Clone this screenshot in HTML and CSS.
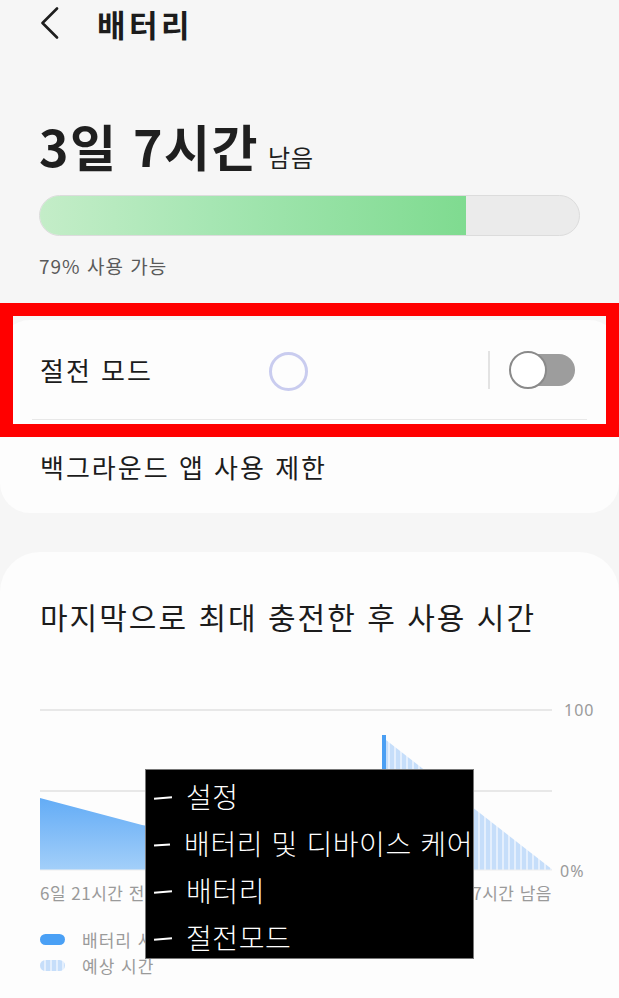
FILE: index.html
```html
<!DOCTYPE html>
<html lang="ko">
<head>
<meta charset="utf-8">
<title>배터리</title>
<link rel="stylesheet" href="styles.css">
</head>
<body>
<div class="screen">
  <header class="appbar">
    <svg class="back" width="20" height="32" viewBox="0 0 20 32"><polyline points="17,1.5 2.5,16 17,30.5" fill="none" stroke="#1e1e1e" stroke-width="2.6" stroke-linecap="round" stroke-linejoin="round"/></svg>
    <h1 class="title">배터리</h1>
  </header>

  <section class="summary">
    <div class="remain"><span class="big">3일 7시간</span><span class="small">남음</span></div>
    <div class="bar"><div class="fill" style="width:79%"></div></div>
    <div class="caption">79% 사용 가능</div>
  </section>

  <section class="card">
    <div class="row row-first">
      <span class="label">절전 모드</span>
      <span class="spinner"></span>
      <span class="vdiv"></span>
      <span class="toggle"><span class="knob"></span></span>
    </div>
    <div class="hdiv"></div>
    <div class="row row-second">
      <span class="label">백그라운드 앱 사용 제한</span>
    </div>
  </section>

  <section class="card2">
    <h2 class="ctitle">마지막으로 최대 충전한 후 사용 시간</h2>
    <div class="chartwrap">
      <svg class="chart" width="552" height="180" viewBox="0 0 552 180">
        <defs>
          <linearGradient id="blueGrad" x1="0" y1="0" x2="0" y2="1">
            <stop offset="0" stop-color="#63acf6"/>
            <stop offset="1" stop-color="#a3cff9"/>
          </linearGradient>
          <pattern id="stripes" width="6" height="10" patternUnits="userSpaceOnUse">
            <rect width="6" height="10" fill="#e4effd"/>
            <rect width="4" height="10" fill="#c6defa"/>
          </pattern>
        </defs>
        <line x1="40" y1="12" x2="552" y2="12" stroke="#e8e8e8" stroke-width="2"/>
        <line x1="40" y1="93" x2="552" y2="93" stroke="#e8e8e8" stroke-width="2"/>
        <polygon points="40,100 142,127 382,168 382,172 40,172" fill="url(#blueGrad)"/>
        <polygon points="386,42 553,172 386,172" fill="url(#stripes)"/>
        <rect x="382" y="37" width="4" height="135" fill="#4b9ff3"/>
        <line x1="40" y1="172" x2="552" y2="172" stroke="#eeeeee" stroke-width="1"/>
      </svg>
      <div class="axis">
        <span>100</span>
        <span>0%</span>
      </div>
    </div>
    <div class="xlabels"><span>6일 21시간 전</span><span>3일 7시간 남음</span></div>
    <ul class="legend">
      <li><span class="swatch solid"></span>배터리 사용 시간</li>
      <li><span class="swatch striped"></span>예상 시간</li>
    </ul>
  </section>

  <div class="highlight"></div>
  <div class="note">
    <p><span class="dash"></span>설정</p>
    <p><span class="dash"></span>배터리 및 디바이스 케어</p>
    <p><span class="dash"></span>배터리</p>
    <p><span class="dash"></span>절전모드</p>
  </div>
</div>
</body>
</html>
```

FILE: styles.css
```css
* { box-sizing: border-box; }
html, body { margin: 0; padding: 0; }
body {
  background: #f6f6f6;
  font-family: "Noto Sans CJK KR", "Noto Sans", sans-serif;
  color: #1c1c1c;
}
.screen {
  position: relative;
  width: 619px;
  height: 998px;
  overflow: hidden;
}
.appbar {
  height: 48px;
  display: flex;
  align-items: center;
  padding-left: 40px;
}
.back { display: block; margin-top: -2px; }
.title {
  margin: 0 0 0 37px;
  font-size: 31px;
  font-weight: 700;
  line-height: 40px;
  letter-spacing: 3.5px;
}
.summary { padding: 67px 39px 0 39px; }
.remain {
  display: flex;
  align-items: baseline;
  height: 60px;
  line-height: 60px;
}
.big {
  font-size: 50px;
  font-weight: 700;
  letter-spacing: 1.5px;
  color: #1f1f1f;
}
.small {
  font-size: 24px;
  margin-left: 9px;
  letter-spacing: 1px;
  color: #1f1f1f;
}
.bar {
  margin-top: 20px;
  height: 41px;
  border-radius: 21px;
  background: #ebebeb;
  border: 1px solid #dcdcdc;
  overflow: hidden;
}
.fill {
  height: 100%;
  background: linear-gradient(90deg, #c4edc8 0%, #a6e6b3 40%, #7fdb90 100%);
}
.caption {
  margin-top: 18px;
  font-size: 19px;
  line-height: 24px;
  letter-spacing: 1px;
  color: #5a5a5a;
}
.card {
  margin-top: 42px;
  background: #fdfdfd;
  border-radius: 30px;
  height: 193px;
}
.row {
  display: flex;
  align-items: center;
  padding: 0 44px 0 40px;
}
.row-first { height: 99px; }
.row-second { height: 93px; }
.label {
  font-size: 26px;
  line-height: 32px;
  letter-spacing: 2px;
  color: #1c1c1c;
}
.spinner {
  width: 39px;
  height: 39px;
  border-radius: 50%;
  border: 3px solid #c9ccef;
  margin-left: 116px;
  margin-top: 4px;
  filter: blur(0.4px);
}
.vdiv {
  width: 2px;
  height: 38px;
  background: #e3e3e3;
  margin-left: auto;
  margin-right: 20px;
}
.toggle {
  position: relative;
  width: 65px;
  height: 32px;
  border-radius: 16px;
  background: #9d9d9d;
}
.knob {
  position: absolute;
  left: -1px;
  top: -3px;
  width: 38px;
  height: 38px;
  border-radius: 50%;
  background: #ffffff;
  border: 2px solid #8a8a8a;
}
.hdiv {
  height: 1px;
  margin: 0 32px;
  background: #e8e8e8;
}
.card2 {
  margin-top: 39px;
  background: #fdfdfd;
  border-radius: 40px 40px 0 0;
  height: 460px;
  padding-top: 46px;
}
.ctitle {
  margin: 0;
  padding-left: 40px;
  font-size: 30px;
  font-weight: 400;
  line-height: 36px;
  letter-spacing: 2px;
  color: #1c1c1c;
}
.chartwrap {
  display: flex;
  margin-top: 64px;
  height: 180px;
}
.chart { display: block; flex: none; }
.axis {
  display: flex;
  flex-direction: column;
  justify-content: space-between;
  padding: 1px 0 0 12px;
  height: 184px;
  font-family: "Noto Sans", "Noto Sans CJK KR", sans-serif;
  font-size: 16px;
  line-height: 22px;
  letter-spacing: 1px;
  color: #9a9a9a;
}
.axis span:last-child { margin-left: -4px; }
.xlabels {
  display: flex;
  justify-content: space-between;
  width: 512px;
  margin: 5px 0 0 40px;
  font-size: 17px;
  line-height: 20px;
  letter-spacing: 0.5px;
  color: #9a9a9a;
}
.legend {
  list-style: none;
  margin: 23px 0 0 40px;
  padding: 0;
}
.legend li {
  display: flex;
  align-items: center;
  height: 26px;
  font-size: 17px;
  letter-spacing: 1px;
  color: #9a9a9a;
}
.swatch {
  width: 25px;
  height: 11px;
  border-radius: 6px;
  margin-right: 17px;
}
.swatch.solid { background: #4aa0f5; }
.swatch.striped {
  background: repeating-linear-gradient(90deg, #c6defa 0 4px, #e4effd 4px 6px);
}
.highlight {
  position: absolute;
  left: 0;
  top: 303px;
  width: 619px;
  height: 134px;
  border: 13px solid #ff0000;
}
.note {
  position: absolute;
  left: 145px;
  top: 769px;
  width: 329px;
  height: 190px;
  background: #000;
  border: 1px solid #777;
  padding: 3px 0 0 6px;
  color: #fff;
}
.note p {
  display: flex;
  align-items: center;
  margin: 0;
  height: 47px;
  font-size: 28px;
  line-height: 47px;
  font-weight: 300;
  letter-spacing: 0.6px;
  white-space: nowrap;
}
.dash {
  display: inline-block;
  width: 18px;
  height: 2px;
  background: #fff;
  margin: 2px 14px 0 2px;
  transform: rotate(-4deg);
}
```
